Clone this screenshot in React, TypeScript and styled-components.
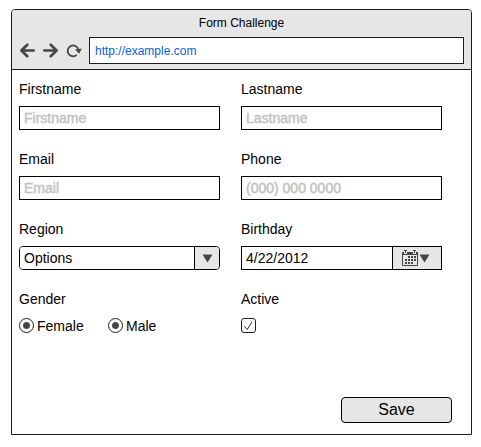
import React from "react";
import styled, { createGlobalStyle } from "styled-components";

const ink = "#000";
const edge = "#1c1c1e";
const panel = "#e6e6e6";
const glyph = "#464646";

const GlobalStyle = createGlobalStyle`
  *, *::before, *::after { box-sizing: border-box; }
  body {
    margin: 0;
    background: #fff;
    color: ${ink};
    font: 14px/16px "Liberation Sans", Arial, Helvetica, sans-serif;
  }
  input, select, button { font: inherit; color: inherit; margin: 0; }
`;

const BrowserWindow = styled.main`
  margin: 9px 9px 12px 11px;
  border: 1px solid ${edge};
  border-radius: 4px 4px 0 0;
  overflow: hidden;
`;

const TitleBar = styled.header`
  padding: 5px 7px;
  background: ${panel};
  border-bottom: 1px solid ${edge};
`;

const Title = styled.h1`
  margin: 0 0 6px;
  font-size: 12px;
  line-height: 16px;
  font-weight: normal;
  text-align: center;
`;

const Toolbar = styled.div`
  display: flex;
  align-items: center;
`;

const NavGroup = styled.nav`
  display: flex;
  width: 70px;
`;

const NavButton = styled.button`
  display: flex;
  width: 24px;
  height: 24px;
  padding: 0;
  border: 0;
  background: none;

  && { color: ${glyph}; }
`;

const Address = styled.input`
  flex: 1;
  min-width: 0;
  height: 27px;
  padding: 0 5px;
  border: 1px solid ${edge};
  border-radius: 0;
  background: #fff;

  && {
    color: #0b5fe0;
    font-size: 12px;
  }
`;

const Form = styled.form`
  display: flex;
  flex-direction: column;
  padding: 11px 19px 11px 7px;
`;

const Fields = styled.div`
  display: grid;
  grid-template-columns: 1fr 1fr;
  gap: 21px;
  padding-right: 10px;
`;

const Field = styled.div`
  display: flex;
  flex-direction: column;
  gap: 9px;
  min-width: 0;
`;

const FieldGroup = styled.fieldset`
  min-width: 0;
  margin: 0;
  padding: 0;
  border: 0;
`;

const Legend = styled.legend`
  padding: 0;
  margin-bottom: 11px;
`;

const TextInput = styled.input`
  width: 100%;
  height: 24px;
  padding: 0 4px;
  border: 1px solid ${ink};
  border-radius: 0;
  background: #fff;

  &::placeholder {
    color: #c2c2c2;
    opacity: 1;
    -webkit-text-stroke: 1px #c2c2c280;
  }
`;

const Combo = styled.div<{ $rounded?: boolean }>`
  display: flex;
  height: 24px;
  border: 1px solid ${ink};
  border-radius: ${(p) => (p.$rounded ? "4px" : "0")};
  overflow: hidden;
`;

const Select = styled.select`
  flex: 1;
  min-width: 0;
  padding: 0 4px;
  border: 0;
  appearance: none;
  background: #fff;
`;

const DateInput = styled.input`
  flex: 1;
  min-width: 0;
  padding: 0 4px;
  border: 0;
  background: #fff;
`;

const SelectArrow = styled.span`
  display: flex;
  width: 25px;
  align-items: center;
  justify-content: center;
  border-left: 1px solid ${ink};
  background: ${panel};
  pointer-events: none;
`;

const CalendarButton = styled.button`
  display: flex;
  width: 49px;
  padding: 0 0 0 9px;
  gap: 1px;
  align-items: center;
  border: 0;
  border-left: 1px solid ${ink};
  background: ${panel};
`;

const Options = styled.div`
  display: grid;
  grid-template-columns: 89px 1fr;
`;

const Option = styled.label`
  display: flex;
  gap: 3px;
  align-items: flex-start;
`;

const Radio = styled.input`
  appearance: none;
  width: 15px;
  height: 15px;
  border: 1px solid #222;
  border-radius: 50%;

  &:checked {
    background: radial-gradient(circle, ${glyph} 3px, #fff 4px);
  }
`;

const CheckWrap = styled.div`
  display: grid;
  width: 15px;
  height: 15px;
  margin-top: 2px;

  > * { grid-area: 1 / 1; }
  svg { pointer-events: none; }
  input:not(:checked) + svg { visibility: hidden; }
`;

const Checkbox = styled.input`
  appearance: none;
  width: 15px;
  height: 15px;
  border: 1px solid #222;
  border-radius: 3px;
  background: #fff;
`;

const SaveButton = styled.button`
  align-self: flex-end;
  width: 111px;
  height: 26px;
  padding: 0;
  border: 1px solid ${ink};
  border-radius: 4px;
  background: ${panel};

  && {
    margin-top: 63px;
    font-size: 16px;
  }
`;

const Triangle = () => (
  <svg width="11" height="9" viewBox="0 0 11 9" aria-hidden="true">
    <path d="M.5 .5h10l-5 8z" fill={glyph} />
  </svg>
);

const CalendarIcon = () => (
  <svg width="16" height="16" viewBox="0 0 16 16" aria-hidden="true" fill={glyph}>
    <path d="M0 2h2v2h3V2h6v2h3V2h2v3H0z" />
    <path d="M2 0h3v1H4v2H3V1H2zM11 0h3v1h-1v2h-1V1h-1z" />
    <path d="M.5 4v11.5h15V4" fill="none" stroke={glyph} />
    <path d="M6 6h2v2H6zM9 6h2v2H9zM12 6h2v2h-2zM3 9h2v2H3zM6 9h2v2H6zM9 9h2v2H9zM12 9h2v2h-2zM3 12h2v2H3zM6 12h2v2H6zM9 12h2v2H9z" />
  </svg>
);

const BackIcon = () => (
  <svg width="17" height="24" viewBox="0 0 17 24" fill="none" stroke="currentColor" strokeWidth="2.7" strokeLinecap="round" strokeLinejoin="round" aria-hidden="true">
    <path d="M14.7 11.5H3M8.3 5.8L2.4 11.5l5.9 5.7" />
  </svg>
);

const ForwardIcon = () => (
  <svg width="17" height="24" viewBox="0 0 17 24" fill="none" stroke="currentColor" strokeWidth="2.7" strokeLinecap="round" strokeLinejoin="round" aria-hidden="true">
    <path d="M2.3 11.5H14M8.7 5.8l5.9 5.7-5.9 5.7" />
  </svg>
);

const ReloadIcon = () => (
  <svg width="17" height="24" viewBox="0 0 17 24" aria-hidden="true">
    <path d="M10.8 15.8A5.4 5.4 0 1 1 12.4 11" fill="none" stroke="currentColor" strokeWidth="1.8" />
    <path d="M9 10.4l6.8-.8-2.6 5.2z" fill="currentColor" />
  </svg>
);

type TextFieldProps = { id: string; label: string; placeholder: string; type?: string };

const TextField = ({ id, label, placeholder, type = "text" }: TextFieldProps) => (
  <Field>
    <label htmlFor={id}>{label}</label>
    <TextInput id={id} type={type} placeholder={placeholder} />
  </Field>
);

export default function App() {
  return (
    <>
      <GlobalStyle />
      <BrowserWindow>
        <TitleBar>
          <Title>Form Challenge</Title>
          <Toolbar>
            <NavGroup>
              <NavButton type="button" aria-label="Back"><BackIcon /></NavButton>
              <NavButton type="button" aria-label="Forward"><ForwardIcon /></NavButton>
              <NavButton type="button" aria-label="Reload"><ReloadIcon /></NavButton>
            </NavGroup>
            <Address type="text" aria-label="Address" defaultValue="http://example.com" />
          </Toolbar>
        </TitleBar>
        <Form onSubmit={(e) => e.preventDefault()}>
          <Fields>
            <TextField id="firstname" label="Firstname" placeholder="Firstname" />
            <TextField id="lastname" label="Lastname" placeholder="Lastname" />
            <TextField id="email" label="Email" placeholder="Email" type="email" />
            <TextField id="phone" label="Phone" placeholder="(000) 000 0000" type="tel" />
            <Field>
              <label htmlFor="region">Region</label>
              <Combo $rounded>
                <Select id="region">
                  <option>Options</option>
                </Select>
                <SelectArrow><Triangle /></SelectArrow>
              </Combo>
            </Field>
            <Field>
              <label htmlFor="birthday">Birthday</label>
              <Combo>
                <DateInput id="birthday" type="text" defaultValue="4/22/2012" />
                <CalendarButton type="button" aria-label="Choose date">
                  <CalendarIcon />
                  <Triangle />
                </CalendarButton>
              </Combo>
            </Field>
            <FieldGroup>
              <Legend>Gender</Legend>
              <Options>
                <Option><Radio type="radio" name="female" defaultChecked />Female</Option>
                <Option><Radio type="radio" name="male" defaultChecked />Male</Option>
              </Options>
            </FieldGroup>
            <Field>
              <label htmlFor="active">Active</label>
              <CheckWrap>
                <Checkbox id="active" type="checkbox" defaultChecked />
                <svg width="15" height="15" viewBox="0 0 15 15" fill="none" stroke="#333" aria-hidden="true">
                  <path d="M3.4 8.2l2.8 3.3 4.9-7.8" />
                </svg>
              </CheckWrap>
            </Field>
          </Fields>
          <SaveButton type="submit">Save</SaveButton>
        </Form>
      </BrowserWindow>
    </>
  );
}
